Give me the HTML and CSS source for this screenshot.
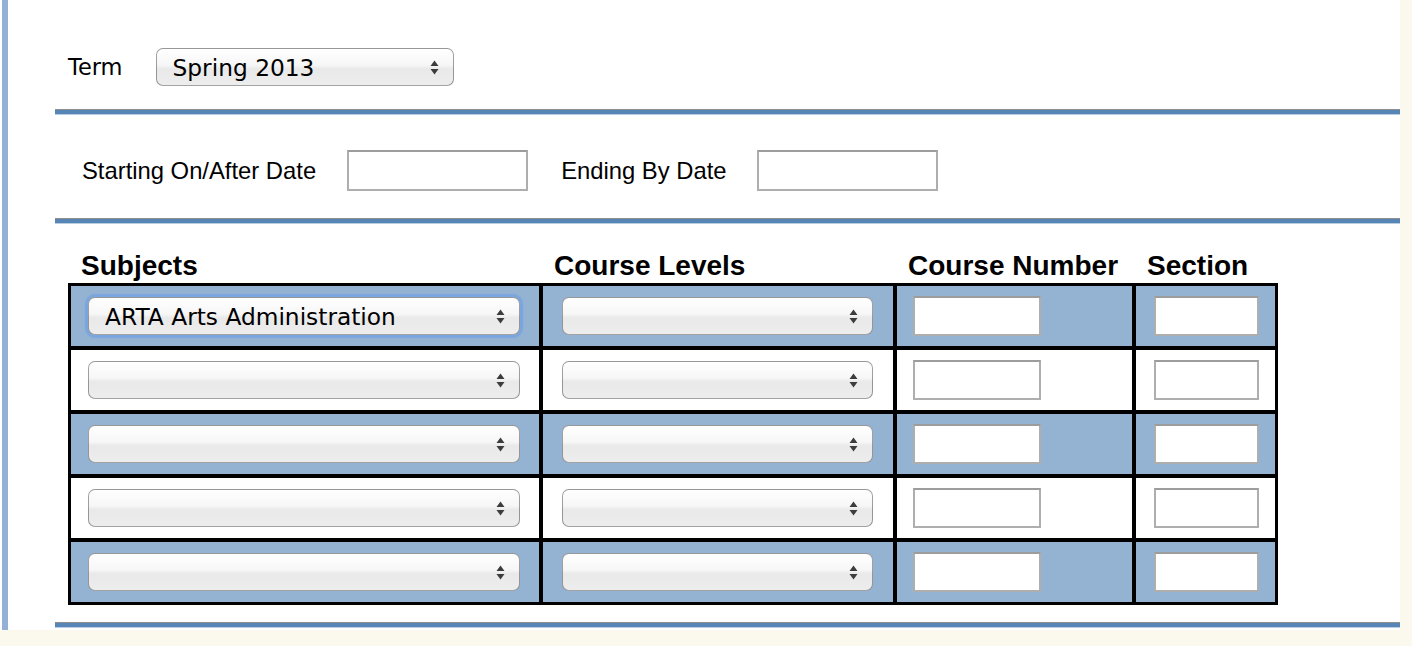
FILE: index.html
```html
<!DOCTYPE html>
<html lang="en">
<head>
  <meta charset="UTF-8" />
  <meta name="viewport" content="width=device-width, initial-scale=1.0" />
  <title>Class Search</title>
  <link rel="stylesheet" href="styles.css">
</head>
<body>
  <div class="page">
    <div class="frame">

      <div class="term-row">
        <label for="term">Term</label>
        <span class="select term-select">
          <select id="term">
            <option>Spring 2013</option>
          </select>
          <svg class="arrows" width="9" height="15" viewBox="0 0 9 15"><path d="M0.5 6 L4.5 0.5 L8.5 6 Z M0.5 9 L8.5 9 L4.5 14.5 Z" /></svg>
        </span>
      </div>

      <div class="rule"></div>

      <div class="date-row">
        <label for="start">Starting On/After Date</label>
        <input type="text" id="start" class="date" />
        <label for="end">Ending By Date</label>
        <input type="text" id="end" class="date" />
      </div>

      <div class="rule"></div>

      <table class="courses">
        <thead>
          <tr>
            <th>Subjects</th>
            <th>Course Levels</th>
            <th>Course Number</th>
            <th>Section</th>
          </tr>
        </thead>
        <tbody>
          <tr class="shade">
            <td class="subj"><span class="select focused"><select><option>ARTA Arts Administration</option></select><svg class="arrows" width="9" height="15" viewBox="0 0 9 15"><path d="M0.5 6 L4.5 0.5 L8.5 6 Z M0.5 9 L8.5 9 L4.5 14.5 Z" /></svg></span></td>
            <td class="level"><span class="select"><select><option></option></select><svg class="arrows" width="9" height="15" viewBox="0 0 9 15"><path d="M0.5 6 L4.5 0.5 L8.5 6 Z M0.5 9 L8.5 9 L4.5 14.5 Z" /></svg></span></td>
            <td class="num"><input type="text" /></td>
            <td class="sect"><input type="text" /></td>
          </tr>
          <tr>
            <td class="subj"><span class="select"><select><option></option></select><svg class="arrows" width="9" height="15" viewBox="0 0 9 15"><path d="M0.5 6 L4.5 0.5 L8.5 6 Z M0.5 9 L8.5 9 L4.5 14.5 Z" /></svg></span></td>
            <td class="level"><span class="select"><select><option></option></select><svg class="arrows" width="9" height="15" viewBox="0 0 9 15"><path d="M0.5 6 L4.5 0.5 L8.5 6 Z M0.5 9 L8.5 9 L4.5 14.5 Z" /></svg></span></td>
            <td class="num"><input type="text" /></td>
            <td class="sect"><input type="text" /></td>
          </tr>
          <tr class="shade">
            <td class="subj"><span class="select"><select><option></option></select><svg class="arrows" width="9" height="15" viewBox="0 0 9 15"><path d="M0.5 6 L4.5 0.5 L8.5 6 Z M0.5 9 L8.5 9 L4.5 14.5 Z" /></svg></span></td>
            <td class="level"><span class="select"><select><option></option></select><svg class="arrows" width="9" height="15" viewBox="0 0 9 15"><path d="M0.5 6 L4.5 0.5 L8.5 6 Z M0.5 9 L8.5 9 L4.5 14.5 Z" /></svg></span></td>
            <td class="num"><input type="text" /></td>
            <td class="sect"><input type="text" /></td>
          </tr>
          <tr>
            <td class="subj"><span class="select"><select><option></option></select><svg class="arrows" width="9" height="15" viewBox="0 0 9 15"><path d="M0.5 6 L4.5 0.5 L8.5 6 Z M0.5 9 L8.5 9 L4.5 14.5 Z" /></svg></span></td>
            <td class="level"><span class="select"><select><option></option></select><svg class="arrows" width="9" height="15" viewBox="0 0 9 15"><path d="M0.5 6 L4.5 0.5 L8.5 6 Z M0.5 9 L8.5 9 L4.5 14.5 Z" /></svg></span></td>
            <td class="num"><input type="text" /></td>
            <td class="sect"><input type="text" /></td>
          </tr>
          <tr class="shade">
            <td class="subj"><span class="select"><select><option></option></select><svg class="arrows" width="9" height="15" viewBox="0 0 9 15"><path d="M0.5 6 L4.5 0.5 L8.5 6 Z M0.5 9 L8.5 9 L4.5 14.5 Z" /></svg></span></td>
            <td class="level"><span class="select"><select><option></option></select><svg class="arrows" width="9" height="15" viewBox="0 0 9 15"><path d="M0.5 6 L4.5 0.5 L8.5 6 Z M0.5 9 L8.5 9 L4.5 14.5 Z" /></svg></span></td>
            <td class="num"><input type="text" /></td>
            <td class="sect"><input type="text" /></td>
          </tr>
        </tbody>
      </table>

      <div class="rule bottom"></div>

    </div>
  </div>
</body>
</html>
```

FILE: styles.css
```css
body {
  margin: 0;
  background-color: #fbf8ee;
  font-family: "Liberation Sans", Arial, sans-serif;
  color: #000;
}
.page {
  width: 1400px;
  height: 630px;
  background-color: #fff;
  padding-left: 2px;
  box-sizing: border-box;
}
.frame {
  height: 100%;
  border-left: 6px solid #92b1d4;
  padding-left: 47px;
}
.rule {
  height: 4px;
  background-color: #5786b6;
  border-top: 1px solid #8e8e8e;
  border-bottom: 1px solid #b9cde3;
}
input[type="text"] {
  box-sizing: border-box;
  display: block;
  margin: 0;
  border: 2px solid #aeaeae;
  border-top-color: #9c9c9c;
  background-color: #fff;
}

/* term */
.term-row {
  display: flex;
  align-items: center;
  gap: 33px;
  padding: 48px 0 0 13px;
  margin-bottom: 23px;
}
.term-row label {
  font-family: "DejaVu Sans", Verdana, sans-serif;
  font-size: 22.5px;
}

/* selects */
.select {
  position: relative;
  display: block;
  height: 38px;
}
.select select {
  -webkit-appearance: none;
  appearance: none;
  width: 100%;
  height: 100%;
  margin: 0;
  padding: 0 30px 0 16px;
  border: 1px solid rgba(0, 0, 0, 0.36);
  border-radius: 7px;
  background: linear-gradient(#ffffff, #f6f6f6 45%, #e9e9e9 55%, #ededed);
  box-shadow: inset 0 1px 0 #fff;
  font-family: "DejaVu Sans", Verdana, sans-serif;
  font-size: 23.3px;
  color: #000;
}
.select .arrows {
  position: absolute;
  right: 15px;
  top: 50%;
  margin-top: -7px;
  fill: #3c3c3c;
}
.select.focused select {
  box-shadow: 0 0 1px 3px rgba(112, 162, 228, 0.75);
}
.term-select {
  width: 298px;
}

/* dates */
.date-row {
  display: flex;
  align-items: center;
  padding-left: 27px;
  margin: 35px 0 27px;
  font-size: 23.8px;
}
.date-row label {
  margin-right: 31px;
}
.date-row input.date {
  width: 181px;
  height: 41px;
  margin-right: 33px;
}

/* course table */
.courses {
  border-spacing: 0;
  margin: 25px 0 17px 13px;
}
.courses th {
  font-size: 28px;
  font-weight: bold;
  text-align: left;
  line-height: 32px;
  padding: 1px 0 1px 13px;
}
.courses td {
  height: 60px;
  padding: 0;
  vertical-align: middle;
  border: 2px solid #000;
}
.courses tbody tr:first-child td {
  border-top-width: 3px;
}
.courses tbody tr:last-child td {
  border-bottom-width: 3px;
}
.courses tr.shade td {
  background-color: #94b2d1;
}
.courses td.subj {
  border-left-width: 3px;
  padding: 0 19px 0 17px;
}
.courses td.subj .select {
  width: 432px;
}
.courses td.level {
  padding: 0 20px 0 19px;
}
.courses td.level .select {
  width: 311px;
}
.courses td.num {
  padding: 0 91px 0 16px;
}
.courses td.num input {
  width: 128px;
  height: 40px;
}
.courses td.sect {
  border-right-width: 3px;
  padding: 0 16px 0 18px;
}
.courses td.sect input {
  width: 105px;
  height: 40px;
}
```
